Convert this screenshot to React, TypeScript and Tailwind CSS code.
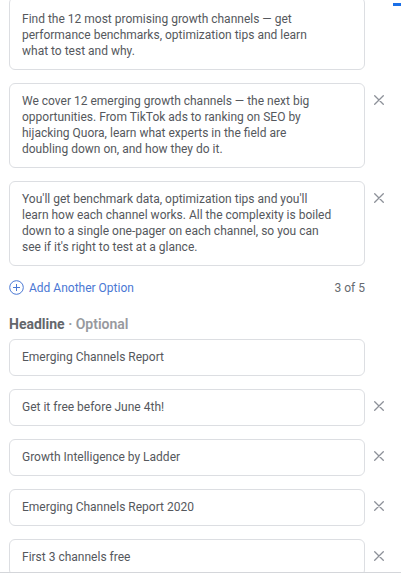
import React from 'react';

const primaryTexts = [
  "We cover 12 emerging growth channels — the next big opportunities. From TikTok ads to ranking on SEO by hijacking Quora, learn what experts in the field are doubling down on, and how they do it.",
  "You'll get benchmark data, optimization tips and you'll learn how each channel works. All the complexity is boiled down to a single one-pager on each channel, so you can see if it's right to test at a glance.",
];

const headlines = [
  'Get it free before June 4th!',
  'Growth Intelligence by Ladder',
  'Emerging Channels Report 2020',
  'First 3 channels free',
];

function CloseIcon() {
  return (
    <svg width="10" height="10" viewBox="0 0 10 10" fill="none">
      <path d="M0.7 0.7 L9.3 9.3 M9.3 0.7 L0.7 9.3" stroke="#8d9199" strokeWidth="1.3" strokeLinecap="round" />
    </svg>
  );
}

function Row({ children, removable }: { children: React.ReactNode; removable?: boolean }) {
  return (
    <div className="flex items-start">
      <div className="w-[356px] rounded-[6px] border border-[#dcdee2] bg-white py-[9.5px] pl-[12px] pr-[32px] text-[12px] leading-[16px] text-[#55585d]">
        {children}
      </div>
      {removable && (
        <div className="flex h-[35px] w-[28px] items-center justify-center">
          <CloseIcon />
        </div>
      )}
    </div>
  );
}

export default function App() {
  return (
    <div className="relative h-[576px] w-[401px] overflow-hidden bg-white font-['Roboto',sans-serif]">
      {/* scroll indicator */}
      <div className="absolute right-0 top-[3px] h-[3px] w-[8px] bg-[#1a6fe8]" />

      <div className="flex flex-col pl-[9px]">
        <div className="-mt-[3px] w-[356px] rounded-[6px] border border-[#dcdee2] pb-[9.5px] pl-[12px] pr-[32px] pt-[13px] text-[12px] leading-[16px] text-[#55585d]">
          Find the 12 most promising growth channels — get performance benchmarks, optimization tips and learn what to test and why.
        </div>

        <div className="mt-[13px] flex flex-col gap-[13px]">
          {primaryTexts.map((t) => (
            <Row key={t} removable>
              {t}
            </Row>
          ))}
        </div>

        <div className="mt-[14px] flex w-[356px] items-center justify-between text-[12px] leading-[16px]">
          <div className="flex items-center gap-[5px] text-[#4a78d4]">
            <svg width="15" height="15" viewBox="0 0 15 15" fill="none">
              <circle cx="7.5" cy="7.5" r="6.8" stroke="#4a78d4" strokeWidth="1" />
              <path d="M7.5 4 V11 M4 7.5 H11" stroke="#4a78d4" strokeWidth="1" />
            </svg>
            <span>Add Another Option</span>
          </div>
          <span className="text-[#666a70]">3 of 5</span>
        </div>

        <div className="mt-[20px] text-[14px] leading-[16px] font-bold text-[#63666b]">
          Headline <span className="font-semibold text-[#97999e]">· Optional</span>
        </div>

        <div className="mt-[7px] flex flex-col gap-[13px]">
          <Row>Emerging Channels Report</Row>
          {headlines.map((h) => (
            <Row key={h} removable>
              {h}
            </Row>
          ))}
        </div>
      </div>

      {/* footer edge */}
      <div className="fixed bottom-0 left-0 h-[4px] w-[401px] border-t border-[#d4d6da] bg-white" />
    </div>
  );
}
